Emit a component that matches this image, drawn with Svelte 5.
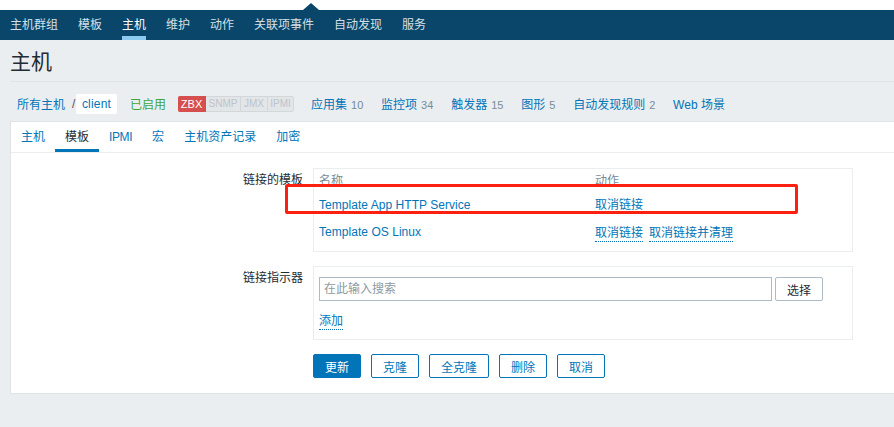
<script>
  const nav = ['主机群组', '模板', '主机', '维护', '动作', '关联项事件', '自动发现', '服务'];
  const stats = [
    { name: '应用集', n: 10 },
    { name: '监控项', n: 34 },
    { name: '触发器', n: 15 },
    { name: '图形', n: 5 },
    { name: '自动发现规则', n: 2 },
    { name: 'Web 场景' }
  ];
  const tabs = ['主机', '模板', 'IPMI', '宏', '主机资产记录', '加密'];
</script>

<div class="page">
  <div class="top"><span class="caret"></span></div>
  <nav class="nav">
    {#each nav as item, i}
      <a class:active={i === 2}>{item}</a>
    {/each}
  </nav>

  <header class="head"><h1>主机</h1></header>

  <div class="crumbs">
    <a class="all">所有主机</a>
    <span class="sep">/</span>
    <a class="client">client</a>
    <span class="enabled">已启用</span>
    <span class="badges">
      <b class="on">ZBX</b><b class="snmp">SNMP</b><b class="jmx">JMX</b><b class="ipmi">IPMI</b>
    </span>
    {#each stats as s}
      <span class="stat"><a>{s.name}</a>{#if s.n}<i>{s.n}</i>{/if}</span>
    {/each}
  </div>

  <main class="card">
    <div class="tabs">
      {#each tabs as t, i}
        <a class:active={i === 1} class:narrow={t === 'IPMI'}>{t}</a>
      {/each}
    </div>

    <div class="form">
      <div class="row">
        <label>链接的模板</label>
        <div class="box linked">
          <div class="tr th"><span>名称</span><span>动作</span></div>
          <div class="tr"><a class="name">Template App HTTP Service</a><span><a>取消链接</a></span></div>
          <div class="tr"><a class="name">Template OS Linux</a><span class="acts"><a class="dot">取消链接</a><a class="dot">取消链接并清理</a></span></div>
        </div>
      </div>

      <div class="row">
        <label>链接指示器</label>
        <div class="box link">
          <div class="search">
            <input placeholder="在此输入搜索" />
            <button class="pick">选择</button>
          </div>
          <a class="dot add">添加</a>
        </div>
      </div>

      <div class="buttons">
        <button class="primary">更新</button>
        <button>克隆</button>
        <button class="wide">全克隆</button>
        <button>删除</button>
        <button>取消</button>
      </div>
    </div>
  </main>

  <div class="mark"></div>
</div>

<style>
  :global(body) { margin: 0; background: #ebeef0; }
  .page {
    position: relative;
    height: 427px;
    overflow: hidden;
    background: #ebeef0;
    font: 12px "Liberation Sans", "Noto Sans CJK SC", sans-serif;
    color: #1f2c33;
  }
  a { color: #0275b8; }
  .top { height: 10px; background: #fff; position: relative; }
  .caret {
    position: absolute;
    left: 303px;
    top: 3px;
    border: 8px solid transparent;
    border-top: 0;
    border-bottom: 7px solid #0a466a;
  }
  .nav {
    height: 30px;
    background: #0a466a;
    display: flex;
    gap: 20px;
    padding-left: 10px;
    line-height: 30px;
  }
  .nav a { color: #d3e0e8; height: 30px; box-sizing: border-box; }
  .nav a.active { color: #fff; border-bottom: 4px solid #8ccaf2; }

  .head { margin: 0 0 0 10px; height: 41px; border-bottom: 1px solid #dfe4e7; }
  h1 { margin: 0; font-size: 21px; font-weight: 400; line-height: 44px; color: #1f2c33; }

  .crumbs {
    height: 35px;
    padding-top: 4px;
    display: flex;
    align-items: center;
    padding-left: 17px;
  }
  .sep { margin: 0 1px 0 7px; color: #555; width: 3px; }
  .client {
    width: 41px;
    height: 20px;
    line-height: 20px;
    text-align: center;
    background: #fff;
    border-radius: 2px;
    margin-right: 13px;
    letter-spacing: 0.2px;
  }
  .enabled { color: #3fa53f; margin-right: 12px; }
  .badges { display: flex; margin-right: 17px; height: 16px; line-height: 14px; font-size: 10px; }
  .badges b {
    font-weight: 400;
    color: #bcc4c9;
    background: #e3e6e8;
    border: 1px solid #d3d7da;
    border-left: 0;
    text-align: center;
    box-sizing: border-box;
  }
  .badges .snmp { width: 35px; }
  .badges .jmx { width: 27px; }
  .badges .ipmi { width: 26px; border-radius: 0 2px 2px 0; }
  .badges b.on {
    color: #fff;
    background: #d64e4e;
    border-color: #d64e4e;
    border-radius: 2px 0 0 2px;
    width: 28px;
    font-size: 11px;
  }
  .stat { margin-right: 17.8px; white-space: nowrap; }
  .stat i { font-style: normal; font-size: 11px; color: #768d99; margin-left: 4px; }

  .card {
    margin-left: 10px;
    height: 271px;
    background: #fff;
    border: 1px solid #dfe4e7;
    border-width: 1px 0 1px 1px;
  }
  .tabs {
    display: flex;
    height: 30px;
    border-bottom: 1px solid #ebeef0;
    line-height: 30px;
  }
  .tabs a { padding: 0 10px; height: 30px; box-sizing: border-box; }
  .tabs a.active { color: #1f2c33; border-bottom: 3px solid #0275b8; }
  .tabs a.narrow { letter-spacing: -0.4px; }

  .form { padding-top: 15px; }
  .row { display: flex; gap: 10px; margin-bottom: 14px; }
  label { width: 292px; text-align: right; line-height: 24px; }
  .box { border: 1px solid #ebeef0; }
  .linked { height: 82px; padding: 0 5px; width: 528px; }
  .tr { display: flex; height: 27px; line-height: 27px; }
  .tr.th { height: 23px; line-height: 25px; color: #768d99; }
  .tr > :first-child { width: 276px; }
  .tr .name { letter-spacing: 0.04px; }
  .acts { display: flex; gap: 6px; align-items: center; }
  .dot { display: inline-block; line-height: 15px; border-bottom: 1px dotted #0275b8; margin-top: 3px; }
  .link { padding: 10px 5px 0; width: 528px; height: 62px; }
  .search { display: flex; gap: 3px; height: 24px; }
  input {
    width: 453px;
    height: 24px;
    box-sizing: border-box;
    border: 1px solid #acbbc4;
    padding: 0 4px;
    font: inherit;
    outline: 0;
  }
  input::placeholder { color: #8e9aa1; }
  button {
    width: 48px;
    height: 24px;
    box-sizing: border-box;
    border: 1px solid #0275b8;
    border-radius: 2px;
    background: #fff;
    color: #0275b8;
    font: inherit;
    padding: 0;
  }
  .pick { border-color: #acbbc4; color: #1f2c33; }
  .add { margin-top: 13px; }
  .buttons { display: flex; gap: 10px; margin-left: 302px; }
  .wide { width: 60px; }
  .primary { background: #0275b8; color: #fff; }

  .mark {
    position: absolute;
    left: 285px;
    top: 184px;
    width: 507px;
    height: 24px;
    border: 3px solid #fb2010;
    border-radius: 2px;
  }
</style>
